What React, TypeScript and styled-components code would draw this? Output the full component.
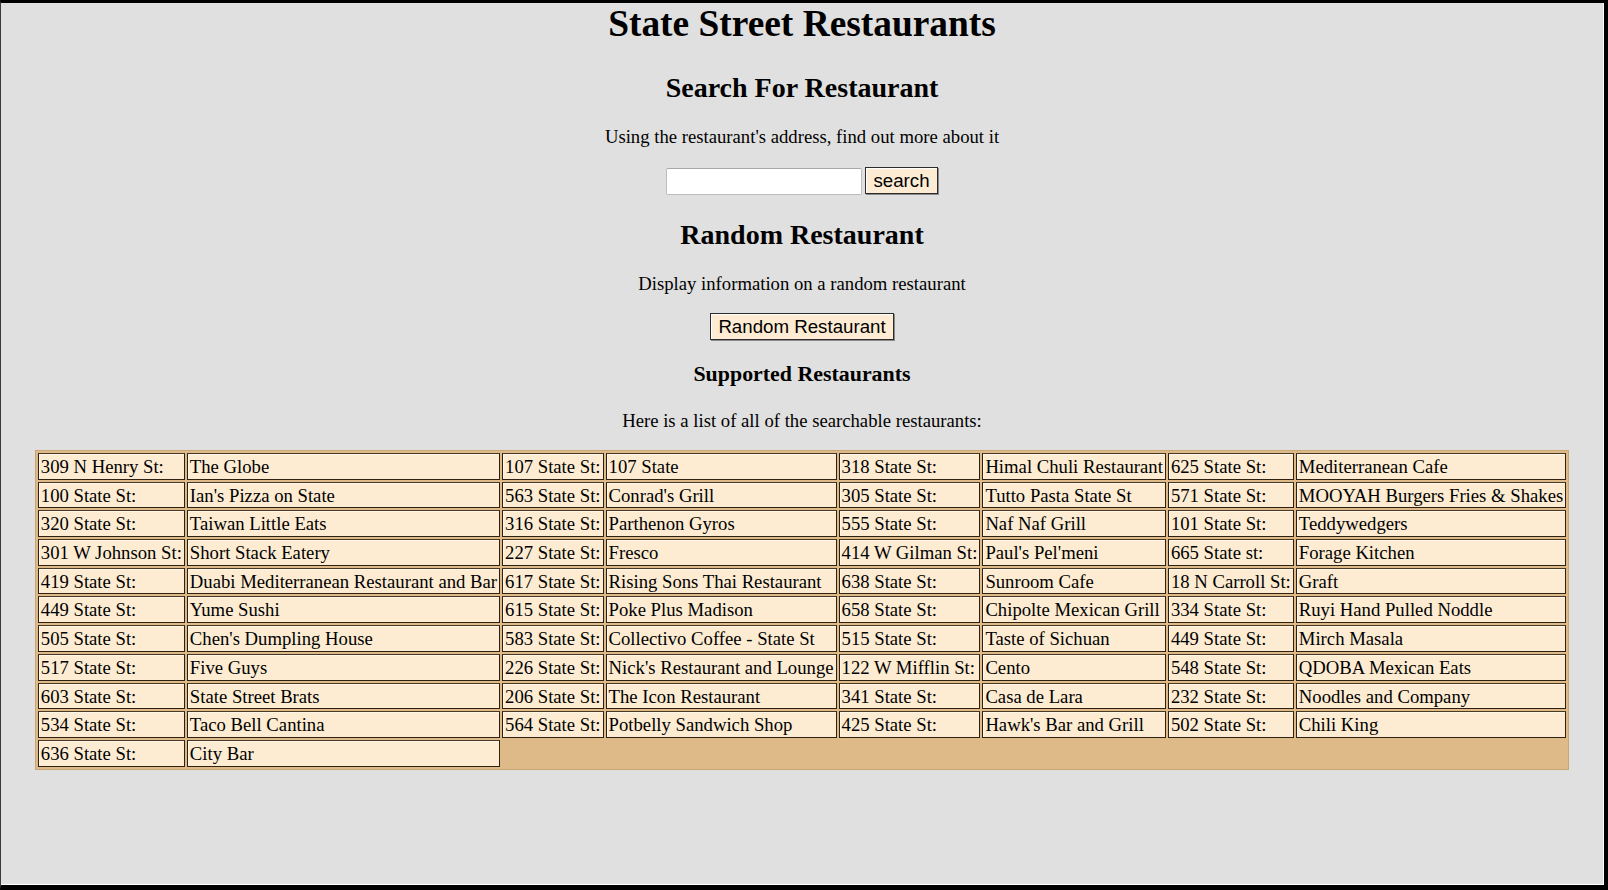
import React from "react";
import styled, { createGlobalStyle } from "styled-components";

const GlobalStyle = createGlobalStyle`
  html, body {
    margin: 0;
    padding: 0;
    background: #000;
  }
  body {
    font-family: "Liberation Serif", "Times New Roman", serif;
    color: #000;
  }
`;

const Frame = styled.div`
  box-sizing: border-box;
  width: 1608px;
  height: 890px;
  border-top: 3px solid #000;
  border-left: 1px solid #3a3a3a;
  border-right: 4px solid #000;
  border-bottom: 5px solid #000;
  overflow: hidden;
`;

const Page = styled.main`
  box-sizing: border-box;
  height: 100%;
  background: #e0e0e0;
  border-right: 1px solid #fff;
  border-bottom: 1px solid #fff;
  display: flex;
  flex-direction: column;
  align-items: center;
  text-align: center;
`;

const Title = styled.h1`
  margin: 1px 0 0;
  font-size: 37.4px;
  line-height: 40px;
  font-weight: bold;
`;

const SectionHeading = styled.h2<{ $top: number }>`
  margin: ${(p) => p.$top}px 0 0;
  font-size: 28px;
  line-height: 32px;
  font-weight: bold;
`;

const SubHeading = styled.h3`
  margin: 21px 0 0;
  font-size: 21.9px;
  line-height: 26px;
  font-weight: bold;
`;

const Text = styled.p<{ $top: number }>`
  margin: ${(p) => p.$top}px 0 0;
  font-size: 18.7px;
  line-height: 22px;
`;

const SearchRow = styled.form`
  margin-top: 18.5px;
  display: flex;
  align-items: center;
  gap: 3px;
  height: 28px;
`;

const SearchInput = styled.input`
  box-sizing: border-box;
  width: 196px;
  height: 27px;
  margin: 1px 0 0;
  padding: 1px 4px;
  background: #fff;
  border: 1px solid #bdbdbd;
  border-top-color: #a8a8a8;
  border-radius: 2px;
  font-size: 16px;
  outline: none;
`;

const Button = styled.button<{ $top?: number }>`
  box-sizing: border-box;
  height: 27px;
  margin: ${(p) => p.$top ?? 0}px 0 0;
  padding: 0 7px;
  background: #fdecd3;
  color: #000;
  border: 1px solid #2b2b2b;
  box-shadow: inset 1px 1px 0 #ffffff, 1px 1px 0 #8a8a8a;
  font-family: "Liberation Sans", Arial, sans-serif;
  font-size: 18.7px;
  line-height: 24px;
  cursor: pointer;
`;

const RestaurantTable = styled.table`
  margin-top: 18px;
  border-collapse: separate;
  border-spacing: 2px;
  border: 1px solid #c9a676;
  background: #deba89;
  text-align: left;
`;

const Cell = styled.td`
  background: #fdecd2;
  border: 1px solid #2e2112;
  border-top-color: #4a3820;
  padding: 3px 2px 1px;
  font-size: 18.7px;
  line-height: 20.7px;
  white-space: nowrap;
  box-shadow: inset 1px 1px 0 #fff7ea;
`;

type Entry = [string, string];

const groups: Entry[][] = [
  [
    ["309 N Henry St:", "The Globe"],
    ["100 State St:", "Ian's Pizza on State"],
    ["320 State St:", "Taiwan Little Eats"],
    ["301 W Johnson St:", "Short Stack Eatery"],
    ["419 State St:", "Duabi Mediterranean Restaurant and Bar"],
    ["449 State St:", "Yume Sushi"],
    ["505 State St:", "Chen's Dumpling House"],
    ["517 State St:", "Five Guys"],
    ["603 State St:", "State Street Brats"],
    ["534 State St:", "Taco Bell Cantina"],
    ["636 State St:", "City Bar"],
  ],
  [
    ["107 State St:", "107 State"],
    ["563 State St:", "Conrad's Grill"],
    ["316 State St:", "Parthenon Gyros"],
    ["227 State St:", "Fresco"],
    ["617 State St:", "Rising Sons Thai Restaurant"],
    ["615 State St:", "Poke Plus Madison"],
    ["583 State St:", "Collectivo Coffee - State St"],
    ["226 State St:", "Nick's Restaurant and Lounge"],
    ["206 State St:", "The Icon Restaurant"],
    ["564 State St:", "Potbelly Sandwich Shop"],
  ],
  [
    ["318 State St:", "Himal Chuli Restaurant"],
    ["305 State St:", "Tutto Pasta State St"],
    ["555 State St:", "Naf Naf Grill"],
    ["414 W Gilman St:", "Paul's Pel'meni"],
    ["638 State St:", "Sunroom Cafe"],
    ["658 State St:", "Chipolte Mexican Grill"],
    ["515 State St:", "Taste of Sichuan"],
    ["122 W Mifflin St:", "Cento"],
    ["341 State St:", "Casa de Lara"],
    ["425 State St:", "Hawk's Bar and Grill"],
  ],
  [
    ["625 State St:", "Mediterranean Cafe"],
    ["571 State St:", "MOOYAH Burgers Fries & Shakes"],
    ["101 State St:", "Teddywedgers"],
    ["665 State st:", "Forage Kitchen"],
    ["18 N Carroll St:", "Graft"],
    ["334 State St:", "Ruyi Hand Pulled Noddle"],
    ["449 State St:", "Mirch Masala"],
    ["548 State St:", "QDOBA Mexican Eats"],
    ["232 State St:", "Noodles and Company"],
    ["502 State St:", "Chili King"],
  ],
];

const rowCount = Math.max(...groups.map((g) => g.length));

export default function App() {
  const rows: Entry[][] = [];
  for (let r = 0; r < rowCount; r++) {
    rows.push(groups.filter((g) => g[r]).map((g) => g[r]));
  }
  return (
    <>
      <GlobalStyle />
      <Frame>
        <Page>
          <Title>State Street Restaurants</Title>
          <SectionHeading $top={28.3}>Search For Restaurant</SectionHeading>
          <Text $top={22}>Using the restaurant's address, find out more about it</Text>
          <SearchRow onSubmit={(e) => e.preventDefault()}>
            <SearchInput type="text" />
            <Button type="submit">search</Button>
          </SearchRow>
          <SectionHeading $top={24}>Random Restaurant</SectionHeading>
          <Text $top={22}>Display information on a random restaurant</Text>
          <Button type="button" $top={18.5}>
            Random Restaurant
          </Button>
          <SubHeading>Supported Restaurants</SubHeading>
          <Text $top={22.6}>Here is a list of all of the searchable restaurants:</Text>
          <RestaurantTable>
            <tbody>
              {rows.map((row, i) => (
                <tr key={i}>
                  {row.map(([addr, name]) => (
                    <React.Fragment key={addr + name}>
                      <Cell>{addr}</Cell>
                      <Cell>{name}</Cell>
                    </React.Fragment>
                  ))}
                </tr>
              ))}
            </tbody>
          </RestaurantTable>
        </Page>
      </Frame>
    </>
  );
}
